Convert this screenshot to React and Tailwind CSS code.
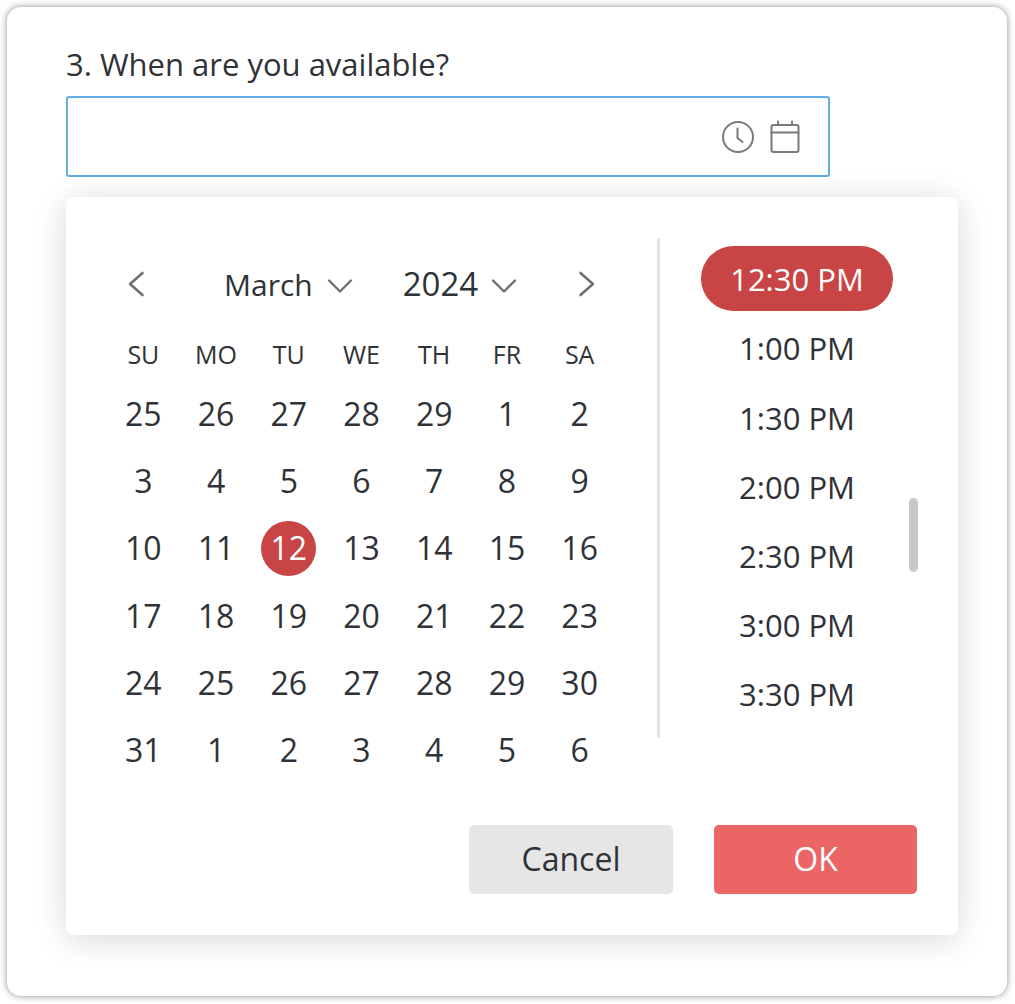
const days = ["SU", "MO", "TU", "WE", "TH", "FR", "SA"];
const dates = [
  25, 26, 27, 28, 29, 1, 2,
  3, 4, 5, 6, 7, 8, 9,
  10, 11, 12, 13, 14, 15, 16,
  17, 18, 19, 20, 21, 22, 23,
  24, 25, 26, 27, 28, 29, 30,
  31, 1, 2, 3, 4, 5, 6,
];
const times = ["12:30 PM", "1:00 PM", "1:30 PM", "2:00 PM", "2:30 PM", "3:00 PM", "3:30 PM"];

function ClockIcon() {
  return (
    <svg width="34" height="34" viewBox="0 0 34 34" fill="none" stroke="#77797c" strokeWidth="2" strokeLinecap="round" strokeLinejoin="round">
      <circle cx="17" cy="17" r="15" />
      <path d="M16.5 8.5V18l5 4" />
    </svg>
  );
}

function CalendarIcon() {
  return (
    <svg width="30" height="34" viewBox="0 0 30 34" fill="none" stroke="#77797c" strokeWidth="2" strokeLinecap="round" strokeLinejoin="round">
      <rect x="1.5" y="5" width="27" height="27" rx="2" />
      <path d="M1.5 12.5h27M8 1.5V5M22 1.5V5" />
    </svg>
  );
}

function ArrowDown({ className }) {
  return (
    <svg width="26" height="16" viewBox="0 0 26 16" fill="none" stroke="#6d7074" strokeWidth="2.4" strokeLinecap="round" strokeLinejoin="round" className={className}>
      <path d="M2 2.5l11 11 11-11" />
    </svg>
  );
}

function ArrowSide({ d, className }) {
  return (
    <svg width="18" height="26" viewBox="0 0 18 26" fill="none" stroke="#6d7074" strokeWidth="2.6" strokeLinecap="round" strokeLinejoin="round" className={className}>
      <path d={d} />
    </svg>
  );
}

export default function App() {
  return (
    <div className="min-h-[1004px] w-[1015px] bg-white pt-[7px] pl-[7px] font-['Open_Sans',sans-serif] text-[#2f3237]">
      <div className="h-[989px] w-[1000px] rounded-[14px] bg-white pt-[38px] pl-[59px] shadow-[0_0_7px_rgba(0,0,0,0.45)]">
        <div className="h-[38px] text-[31px] leading-[38px]">3. When are you available?</div>
        <div className="mt-[13px] flex h-[81px] w-[764px] items-center justify-end gap-[15px] rounded-[3px] border-2 border-[#62aee4] pr-[28px]">
          <ClockIcon />
          <CalendarIcon />
        </div>
        <div className="mt-[20px] h-[738px] w-[892px] rounded-[8px] bg-white shadow-[0_4px_32px_rgba(0,0,0,0.16)]">
          <div className="flex pt-[41px]">
            <div className="w-[591px] pl-[41px]">
              <div className="mt-[21px] flex h-[50px] w-[509px] items-center">
                <ArrowSide d="M15.5 2L3 13l12.5 11" className="ml-[20px]" />
                <span className="ml-[79px] text-[30px]">March</span>
                <ArrowDown className="ml-[14px] mt-[4px]" />
                <span className="ml-[50px] text-[33px]">2024</span>
                <ArrowDown className="ml-[13px] mt-[4px]" />
                <ArrowSide d="M2.5 2L15 13 2.5 24" className="ml-[61px]" />
              </div>
              <div className="mt-[25px] grid w-[509px] grid-cols-7 text-center text-[25px] leading-[40px]">
                {days.map((d) => (
                  <div key={d}>{d}</div>
                ))}
              </div>
              <div className="mt-[6.5px] grid w-[509px] grid-cols-7 text-center text-[32px]">
                {dates.map((d, i) => (
                  <div key={i} className="flex h-[67.2px] items-center justify-center">
                    {i === 16 ? (
                      <span className="flex h-[55px] w-[55px] items-center justify-center rounded-full bg-[#c94545] text-white">{d}</span>
                    ) : (
                      d
                    )}
                  </div>
                ))}
              </div>
            </div>
            <div className="relative h-[500px] w-[301px] border-l-[3px] border-[#e4e4e4]">
              <div className="absolute left-[249px] top-[260px] h-[74px] w-[9px] rounded-full bg-[#c8c8c8]" />
              <div className="ml-[41px] flex w-[192px] flex-col items-center pt-[8px] text-[31px]">
                {times.map((t, i) => (
                  <div
                    key={t}
                    className={i === 0
                      ? "flex h-[65px] w-[192px] items-center justify-center rounded-full bg-[#c94545] pt-[2px] text-white"
                      : "mt-[4.2px] flex h-[65px] w-[192px] items-center justify-center pt-[2px]"}
                  >
                    {t}
                  </div>
                ))}
              </div>
            </div>
          </div>
          <div className="mt-[41.5px] flex justify-end gap-[41px] pr-[41px] text-[32px]">
            <button className="h-[69px] w-[204px] rounded-[5px] bg-[#e6e6e6] pb-[2px]">Cancel</button>
            <button className="h-[69px] w-[203px] rounded-[5px] bg-[#ec6565] pb-[2px] text-white">OK</button>
          </div>
        </div>
      </div>
    </div>
  );
}
